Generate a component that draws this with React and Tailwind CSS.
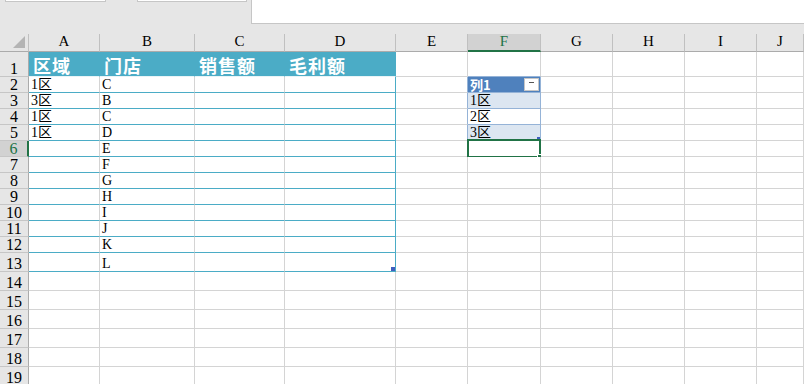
import React from "react";

const COLS = ["A", "B", "C", "D", "E", "F", "G", "H", "I", "J"];
const GRID = "grid grid-cols-[29px_71px_95px_90px_111px_72px_73px_72px_72px_72px_1fr]";
const SERIF = "font-['Liberation_Serif','Noto_Sans_CJK_SC',serif]";

const colA = { 2: "1区", 3: "3区", 4: "1区", 5: "1区" };
const colB = { 2: "C", 3: "B", 4: "C", 5: "D", 6: "E", 7: "F", 8: "G", 9: "H", 10: "I", 11: "J", 12: "K", 13: "L" };
const colF = { 3: "1区", 4: "2区", 5: "3区" };
const headers = ["区域", "门店", "销售额", "毛利额"];

function rowHeight(r) {
  if (r === 1) return "h-[25px]";
  if (r <= 12) return "h-4";
  return "h-[19px]";
}

function Cell({ r, c }) {
  const inTable = r >= 1 && r <= 13 && c <= 3;
  const inF = c === 5 && r >= 2 && r <= 5;
  let bg = "bg-white";
  let rb = "border-r-[#d4d4d4]";
  let bb = "border-b-[#d4d4d4]";
  let content = null;

  if (inTable) {
    if (r === 1) {
      bg = "bg-[#4bacc6]";
      rb = "border-r-[#4bacc6]";
      bb = "border-b-[#e9f4f7]";
      content = (
        <span className="pl-[4px] pb-[2px] text-[18px] leading-none font-bold text-white font-['Noto_Sans_CJK_SC',sans-serif] tracking-[1px]">
          {headers[c]}
        </span>
      );
    } else {
      bb = "border-b-[#4bacc6]";
      if (c === 3) rb = "border-r-[#4bacc6]";
      const t = c === 0 ? colA[r] : c === 1 ? colB[r] : null;
      if (t)
        content = (
          <span className={`pl-[2px] text-[14px] leading-[15px] text-black ${SERIF}`}>{t}</span>
        );
    }
  }
  if (c === 4 && r >= 2 && r <= 5) rb = "border-r-[#95b3d7]";
  if (c === 5 && r === 1) bb = "border-b-[#95b3d7]";
  if (inF) {
    rb = "border-r-[#95b3d7]";
    bb = "border-b-[#95b3d7]";
    if (r === 2) {
      bg = "bg-[#4f81bd]";
      content = (
        <>
          <span className="pl-[2px] text-[13px] leading-[15px] font-bold text-white font-['Noto_Sans_CJK_SC',sans-serif]">
            列1
          </span>
          <div className="absolute right-[1px] top-[1px] w-[15px] h-[13px] bg-white border border-[#c6c6c6] flex items-start justify-center pt-[3px]">
            <div className="w-[5px] h-[1px] bg-[#555]" />
          </div>
        </>
      );
    } else {
      bg = r === 4 ? "bg-white" : "bg-[#dce6f1]";
      content = (
        <span className={`pl-[2px] text-[14px] leading-[15px] text-black ${SERIF}`}>{colF[r]}</span>
      );
    }
  }

  return (
    <div className={`relative flex items-end border-r border-b ${rb} ${bb} ${bg} whitespace-nowrap`}>
      {content}
      {r === 13 && c === 3 && (
        <div className="absolute right-0 bottom-0 w-[4px] h-[4px] bg-[#3f5fbf]" />
      )}
      {r === 5 && c === 5 && (
        <div className="absolute right-0 bottom-0 w-[3px] h-[3px] bg-[#3f5fbf]" />
      )}
      {r === 6 && c === 5 && (
        <div className="absolute -left-px -top-[2px] right-[-1px] bottom-[-2px] border-2 border-[#217346]">
          <div className="absolute -right-[4px] -bottom-[4px] w-[6px] h-[6px] bg-[#217346] border border-white" />
        </div>
      )}
    </div>
  );
}

export default function App() {
  const rows = Array.from({ length: 19 }, (_, i) => i + 1);
  return (
    <div className={`w-[804px] h-[384px] overflow-hidden bg-white ${SERIF}`}>
      <div className="h-[34px] bg-[#e6e6e6] flex items-start">
        <div className="ml-[5px] w-[101px] h-[2px] bg-white border border-t-0 border-[#c6c6c6]" />
        <div className="ml-[31px] w-[110px] h-[2px] bg-white border border-t-0 border-[#c6c6c6]" />
        <div className="ml-[4px] flex-1 h-[24px] bg-white border-l border-b border-[#c6c6c6]" />
      </div>
      <div className={`${GRID} h-[18px] bg-[#e6e6e6]`}>
        <div className="relative border-r border-b border-r-[#c0c0c0] border-b-[#ababab]">
          <svg className="absolute right-[3px] bottom-[3px]" width="12" height="12" viewBox="0 0 12 12">
            <polygon points="12,0 12,12 0,12" fill="#b4b4b4" />
          </svg>
        </div>
        {COLS.map((c) =>
          c === "F" ? (
            <div
              key={c}
              className="flex items-end justify-center pb-[1px] bg-[#d2d2d2] text-[#217346] border-r border-r-[#c0c0c0] border-b-2 border-b-[#217346] text-[15px] leading-none"
            >
              {c}
            </div>
          ) : (
            <div
              key={c}
              className="flex items-end justify-center pb-[2px] text-black border-r border-r-[#c0c0c0] border-b border-b-[#ababab] text-[15px] leading-none"
            >
              {c}
            </div>
          )
        )}
      </div>
      {rows.map((r) => (
        <div key={r} className={`${GRID} ${rowHeight(r)}`}>
          {r === 6 ? (
            <div className="flex items-end justify-center bg-[#d2d2d2] text-[#217346] border-r-2 border-r-[#217346] border-b border-b-[#c6c6c6] text-[16px] leading-[15px]">
              {r}
            </div>
          ) : (
            <div className="flex items-end justify-center bg-[#e6e6e6] text-black border-r border-r-[#ababab] border-b border-b-[#c6c6c6] text-[16px] leading-[15px]">
              {r}
            </div>
          )}
          {COLS.map((c, ci) => (
            <Cell key={c} r={r} c={ci} />
          ))}
        </div>
      ))}
    </div>
  );
}
